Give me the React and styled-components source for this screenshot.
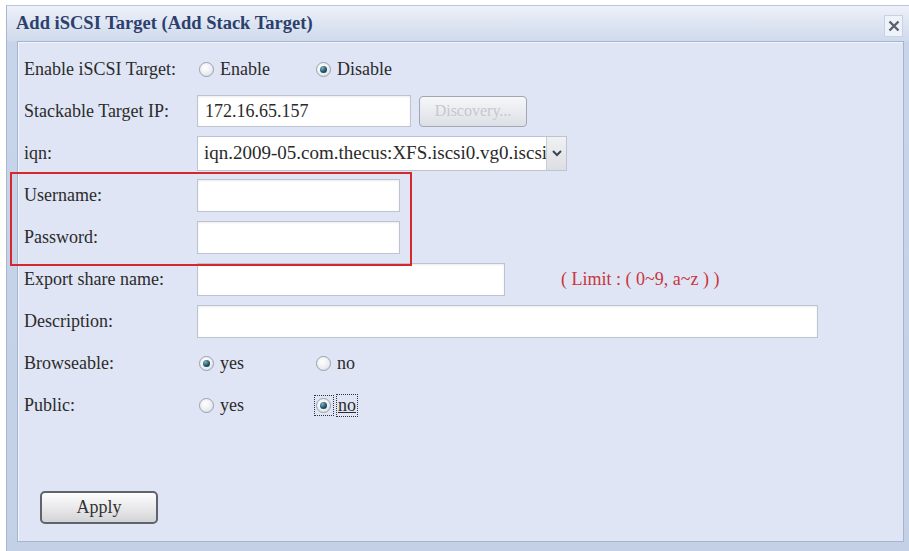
import React from 'react';
import styled, { createGlobalStyle, css } from 'styled-components';

const GlobalStyle = createGlobalStyle`
  body {
    margin: 0;
    background: #ffffff;
    font-family: "Liberation Serif", "Times New Roman", serif;
  }
`;

const Window = styled.div`
  margin: 5px 0 0 6px;
  width: 903px;
  height: 546px;
  box-sizing: border-box;
  border-left: 1px solid #a9b7ce;
  border-top: 1px solid #b9c6da;
  background: linear-gradient(#edf1f9 0, #cfdaec 35px, #c7d4e9 36px, #c3d0e6 100%);
  display: flex;
  flex-direction: column;
`;

const TitleBar = styled.div`
  height: 35px;
  display: flex;
  align-items: center;
  justify-content: space-between;
  padding: 0 6px 0 9px;
`;

const Title = styled.div`
  font-size: 18.5px;
  font-weight: bold;
  color: #2c3f6d;
`;

const CloseButton = styled.div`
  width: 17px;
  height: 20px;
  margin-top: 4px;
  border: 1px solid #c8d2e2;
  background: #eef2f9;
  display: flex;
  align-items: center;
  justify-content: center;
`;

const Panel = styled.div`
  flex: 1;
  margin: 0 5px 9px 10px;
  border: 1px solid #a6b5cf;
  box-shadow: inset 1px 1px 0 #f1f4fb;
  background: #dfe5f5;
  padding: 6px 0 0 6px;
  display: flex;
  flex-direction: column;
`;

const Row = styled.div`
  display: flex;
  align-items: center;
  height: 42px;
`;

const Label = styled.div`
  width: 173px;
  font-size: 18px;
  color: #2b2b2b;
`;

const TextInput = styled.div`
  width: ${p => p.$w}px;
  height: ${p => p.$h || 33}px;
  box-sizing: border-box;
  border: 1px solid #bcc4d0;
  box-shadow: inset 0 1px 2px rgba(0, 0, 0, 0.08);
  background: #ffffff;
  font-size: 18px;
  color: #2a2a2a;
  padding: 0 7px;
  display: flex;
  align-items: center;
`;

const DiscoveryButton = styled.div`
  margin-left: 8px;
  width: 108px;
  height: 31px;
  box-sizing: border-box;
  border: 1px solid #9ea7b3;
  border-radius: 4px;
  background: linear-gradient(#f6f7f9, #dcdfe5);
  color: #c4c8cf;
  font-size: 16px;
  display: flex;
  align-items: center;
  justify-content: center;
`;

const Select = styled.div`
  width: 370px;
  height: 35px;
  box-sizing: border-box;
  border: 1px solid #bcc4d0;
  background: #ffffff;
  display: flex;
`;

const SelectText = styled.div`
  flex: 1;
  overflow: hidden;
  white-space: nowrap;
  font-size: 19px;
  color: #2a2a2a;
  padding-left: 6px;
  display: flex;
  align-items: center;
`;

const SelectArrow = styled.div`
  width: 19px;
  flex-shrink: 0;
  border-left: 1px solid #c9ced6;
  background: linear-gradient(#f0f1f3, #dcdee2);
  display: flex;
  align-items: center;
  justify-content: center;
`;

const Hint = styled.div`
  margin-left: 56px;
  font-size: 18px;
  color: #c8373a;
`;

const Option = styled.div`
  width: 117px;
  display: flex;
  align-items: center;
  gap: 3px;
  font-size: 18px;
  color: #2b2b2b;
`;

const RadioWrap = styled.span`
  padding: 3px 3px 3px 2px;
  ${p => p.$focused && css`
    outline: 1px dotted #333;
    outline-offset: -1px;
  `}
`;

const Radio = styled.span`
  display: block;
  width: 15px;
  height: 15px;
  box-sizing: border-box;
  border-radius: 50%;
  border: 1px solid #98a1ac;
  background: radial-gradient(circle at 40% 35%, #ffffff 0, #e9ecf0 60%, #cdd2d9 100%);
  position: relative;
  ${p => p.$checked && css`
    &::after {
      content: '';
      position: absolute;
      left: 3px;
      top: 3px;
      width: 7px;
      height: 7px;
      border-radius: 50%;
      background: radial-gradient(circle at 35% 30%, #7fb2c4 0, #1f5566 55%, #0f2f3a 100%);
    }
  `}
`;

const OptionText = styled.span`
  ${p => p.$focused && css`
    outline: 1px dotted #333;
    padding: 0 1px;
    text-decoration: underline;
  `}
`;

const Highlight = styled.div`
  position: relative;
  &::after {
    content: '';
    position: absolute;
    left: -14px;
    top: -2px;
    width: 402px;
    height: 94px;
    box-sizing: border-box;
    border: 2px solid #d8262d;
    pointer-events: none;
  }
`;

const Footer = styled.div`
  margin-top: auto;
  padding: 0 0 17px 16px;
`;

const ApplyButton = styled.div`
  width: 118px;
  height: 33px;
  box-sizing: border-box;
  border: 2px solid #5f646c;
  border-radius: 5px;
  background: linear-gradient(#fdfdfd, #e6e6e8 60%, #d2d3d6);
  font-size: 18px;
  color: #333;
  display: flex;
  align-items: center;
  justify-content: center;
`;

function RadioOption({ checked, focused, children }) {
  return (
    <Option>
      <RadioWrap $focused={focused}>
        <Radio $checked={checked} />
      </RadioWrap>
      <OptionText $focused={focused}>{children}</OptionText>
    </Option>
  );
}

export default function App() {
  return (
    <>
      <GlobalStyle />
      <Window>
        <TitleBar>
          <Title>Add iSCSI Target (Add Stack Target)</Title>
          <CloseButton>
            <svg width="12" height="12" viewBox="0 0 12 12">
              <path d="M1.5 1.5 L10.5 10.5 M10.5 1.5 L1.5 10.5" stroke="#5b616c" strokeWidth="2.4" />
            </svg>
          </CloseButton>
        </TitleBar>
        <Panel>
          <Row>
            <Label>Enable iSCSI Target:</Label>
            <RadioOption>Enable</RadioOption>
            <RadioOption checked>Disable</RadioOption>
          </Row>
          <Row>
            <Label>Stackable Target IP:</Label>
            <TextInput $w={214} $h={32}>172.16.65.157</TextInput>
            <DiscoveryButton>Discovery...</DiscoveryButton>
          </Row>
          <Row>
            <Label>iqn:</Label>
            <Select>
              <SelectText>iqn.2009-05.com.thecus:XFS.iscsi0.vg0.iscsi</SelectText>
              <SelectArrow>
                <svg width="10" height="8" viewBox="0 0 10 8">
                  <path d="M1 2 L5 6 L9 2" fill="none" stroke="#3d4350" strokeWidth="2" />
                </svg>
              </SelectArrow>
            </Select>
          </Row>
          <Highlight>
            <Row>
              <Label>Username:</Label>
              <TextInput $w={203} />
            </Row>
            <Row>
              <Label>Password:</Label>
              <TextInput $w={203} />
            </Row>
          </Highlight>
          <Row>
            <Label>Export share name:</Label>
            <TextInput $w={308} />
            <Hint>( Limit : ( 0~9, a~z ) )</Hint>
          </Row>
          <Row>
            <Label>Description:</Label>
            <TextInput $w={621} />
          </Row>
          <Row>
            <Label>Browseable:</Label>
            <RadioOption checked>yes</RadioOption>
            <RadioOption>no</RadioOption>
          </Row>
          <Row>
            <Label>Public:</Label>
            <RadioOption>yes</RadioOption>
            <RadioOption checked focused>no</RadioOption>
          </Row>
          <Footer>
            <ApplyButton>Apply</ApplyButton>
          </Footer>
        </Panel>
      </Window>
    </>
  );
}
